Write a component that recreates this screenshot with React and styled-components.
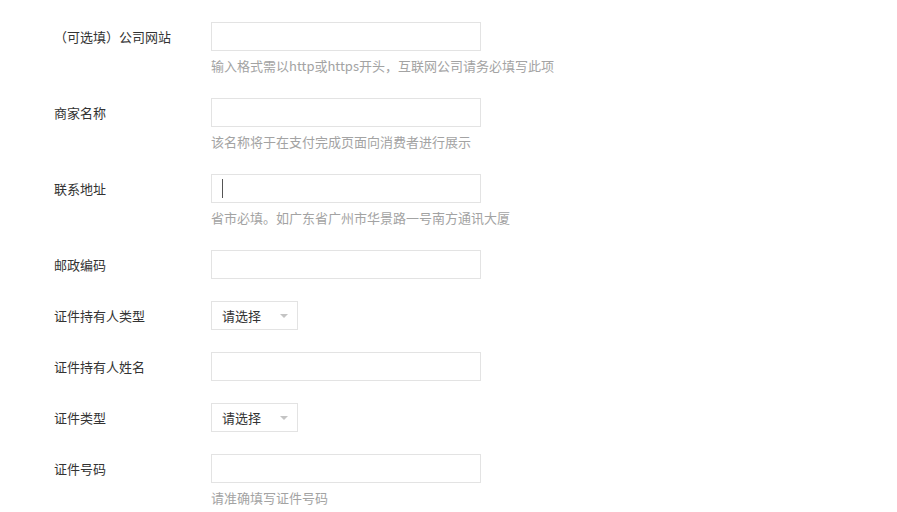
import React from "react";
import styled, { createGlobalStyle } from "styled-components";

const GlobalStyle = createGlobalStyle`
  html, body {
    margin: 0;
    padding: 0;
    background: #fff;
  }
  body {
    font-family: "Microsoft YaHei", "Noto Sans CJK SC", "Noto Sans", sans-serif;
    font-size: 13px;
    color: #333;
  }
`;

const Form = styled.div`
  padding: 22px 0 0 54px;
  display: flex;
  flex-direction: column;
  gap: 22px;
`;

const Row = styled.div`
  display: grid;
  grid-template-columns: 157px auto;
  align-items: start;
`;

const Label = styled.div`
  height: 29px;
  line-height: 29px;
  font-size: 13px;
  color: #333;
  white-space: nowrap;
`;

const Field = styled.div`
  display: flex;
  flex-direction: column;
`;

const TextBox = styled.div`
  box-sizing: border-box;
  width: 270px;
  height: 29px;
  border: 1px solid #e3e3e3;
  background: #fff;
  display: flex;
  align-items: center;
  padding-left: 10px;
`;

const Caret = styled.span`
  display: block;
  width: 1px;
  height: 19px;
  background: #555;
`;

const Select = styled.div`
  box-sizing: border-box;
  width: 87px;
  height: 29px;
  border: 1px solid #e3e3e3;
  background: #fff;
  display: flex;
  align-items: center;
  justify-content: space-between;
  padding: 0 9px 0 10px;
  font-size: 13px;
  color: #333;
`;

const Arrow = styled.span`
  width: 0;
  height: 0;
  border-left: 4px solid transparent;
  border-right: 4px solid transparent;
  border-top: 4px solid #c4c4c4;
`;

const Hint = styled.div`
  margin-top: 4px;
  height: 21px;
  line-height: 21px;
  font-size: 13px;
  color: #a3a3a3;
  white-space: nowrap;
`;

const rows = [
  { label: "（可选填）公司网站", type: "text", hint: "输入格式需以http或https开头，互联网公司请务必填写此项" },
  { label: "商家名称", type: "text", hint: "该名称将于在支付完成页面向消费者进行展示" },
  { label: "联系地址", type: "text", focused: true, hint: "省市必填。如广东省广州市华景路一号南方通讯大厦" },
  { label: "邮政编码", type: "text" },
  { label: "证件持有人类型", type: "select" },
  { label: "证件持有人姓名", type: "text" },
  { label: "证件类型", type: "select" },
  { label: "证件号码", type: "text", hint: "请准确填写证件号码" },
];

export default function App() {
  return (
    <>
      <GlobalStyle />
      <Form>
        {rows.map((r) => (
          <Row key={r.label}>
            <Label>{r.label}</Label>
            <Field>
              {r.type === "select" ? (
                <Select>
                  <span>请选择</span>
                  <Arrow />
                </Select>
              ) : (
                <TextBox>{r.focused && <Caret />}</TextBox>
              )}
              {r.hint && <Hint>{r.hint}</Hint>}
            </Field>
          </Row>
        ))}
      </Form>
    </>
  );
}
